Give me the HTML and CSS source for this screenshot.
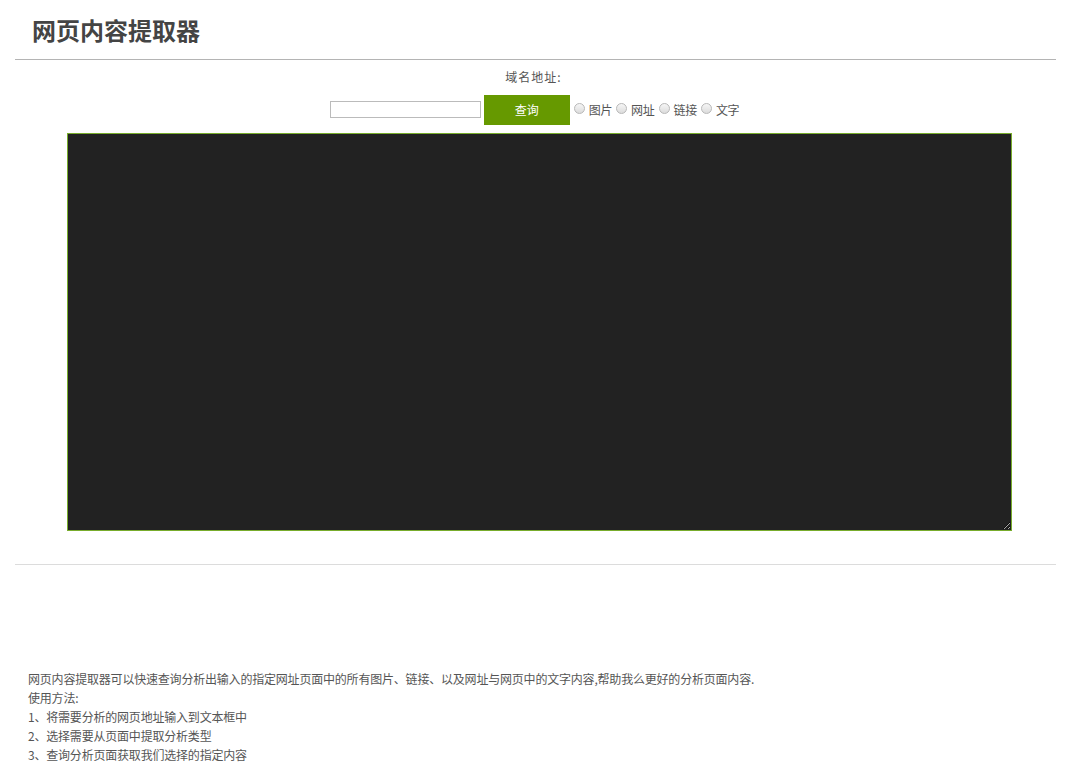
FILE: index.html
```html
<!DOCTYPE html>
<html lang="zh-CN">
<head>
<meta charset="utf-8">
<title>网页内容提取器</title>
<link rel="stylesheet" href="styles.css">
</head>
<body>
<div class="page">
  <header class="header">
    <h1 class="title">网页内容提取器</h1>
  </header>
  <section class="tool">
    <div class="label">域名地址:</div>
    <div class="row">
      <input class="url" type="text">
      <button class="btn" type="button">查询</button>
      <label class="opt"><input type="radio" name="t"> 图片</label>
      <label class="opt"><input type="radio" name="t"> 网址</label>
      <label class="opt"><input type="radio" name="t"> 链接</label>
      <label class="opt"><input type="radio" name="t"> 文字</label>
    </div>
    <div class="area-wrap">
      <textarea class="area"></textarea>
    </div>
  </section>
  <section class="desc">
    <p>网页内容提取器可以快速查询分析出输入的指定网址页面中的所有图片、链接、以及网址与网页中的文字内容,帮助我么更好的分析页面内容.</p>
    <p>使用方法:</p>
    <p>1、将需要分析的网页地址输入到文本框中</p>
    <p>2、选择需要从页面中提取分析类型</p>
    <p>3、查询分析页面获取我们选择的指定内容</p>
  </section>
</div>
</body>
</html>
```
FILE: styles.css
```css
html, body {
  margin: 0;
  padding: 0;
  background: #fff;
}
body {
  font-family: "Microsoft YaHei", "Noto Sans CJK SC", sans-serif;
  font-size: 12px;
  color: #555;
}
.page {
  padding: 0 24px 0 15px;
}
.header {
  height: 59px;
  border-bottom: 1px solid #b4b4b4;
  display: flex;
  align-items: center;
}
.title {
  margin: 0 0 0 17px;
  font-size: 24px;
  font-weight: bold;
  color: #444;
  line-height: 1;
}
.tool {
  border-bottom: 1px solid #dcdcdc;
  padding-top: 8px;
  padding-bottom: 33px;
}
.label {
  text-align: center;
  height: 18px;
  line-height: 18px;
  padding-right: 4px;
  letter-spacing: 1px;
}
.row {
  display: flex;
  justify-content: center;
  align-items: center;
  margin-top: 9px;
  height: 29px;
  padding-right: 2px;
}
.url {
  width: 151px;
  height: 17px;
  box-sizing: border-box;
  border: 1px solid #bbb;
  padding: 0;
  margin: 0 3px 0 0;
}
.btn {
  width: 86px;
  height: 30px;
  background: #669900;
  color: #fff;
  border: none;
  font-family: inherit;
  font-size: 12px;
  padding: 0;
  margin: 0;
}
.opt {
  display: flex;
  align-items: center;
  color: #555;
  letter-spacing: -0.3px;
}
.opt input {
  -webkit-appearance: none;
  appearance: none;
  box-sizing: border-box;
  width: 11px;
  height: 11px;
  border: 1px solid #b8b8b8;
  border-radius: 50%;
  background: linear-gradient(#f6f6f6, #dcdcdc);
  margin: 0 4px 3px 4px;
}
.area-wrap {
  margin-top: 9px;
  padding-left: 52px;
}
.area {
  width: 945px;
  height: 398px;
  box-sizing: border-box;
  background: #222;
  border: 1px solid #78ac2c;
  margin: 0;
  display: block;
  resize: both;
}
.desc {
  padding: 104px 0 0 13px;
}
.desc p {
  margin: 0;
  line-height: 19px;
  color: #555;
  letter-spacing: -0.2px;
}
```
